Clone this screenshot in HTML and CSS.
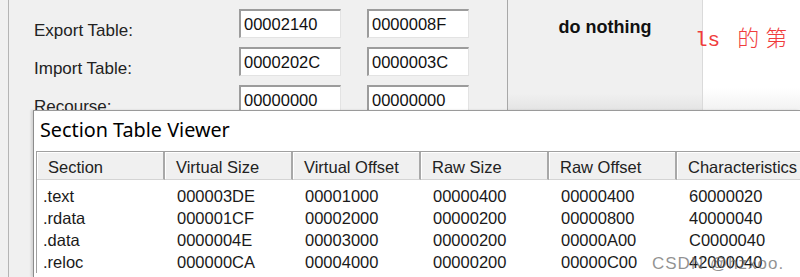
FILE: index.html
```html
<!DOCTYPE html>
<html lang="en">

<head>
  <title>Section Table Viewer</title>
  <meta charset="utf-8" />
  <link rel="stylesheet" href="styles.css">
</head>

<body>
  <div class="frame">
    <div class="top">
      <div class="fields">
        <span class="label">Export Table:</span>
        <span class="box">00002140</span>
        <span class="box">0000008F</span>
        <span class="label">Import Table:</span>
        <span class="box">0000202C</span>
        <span class="box">0000003C</span>
        <span class="label">Recourse:</span>
        <span class="box">00000000</span>
        <span class="box">00000000</span>
      </div>
      <div class="panel">do nothing</div>
      <div class="note"><span class="latin">ls</span><span class="cjk">的第</span></div>
    </div>

    <div class="dialog">
      <div class="title">Section Table Viewer</div>
      <div class="list">
        <div class="head">Section</div>
        <div class="head">Virtual Size</div>
        <div class="head">Virtual Offset</div>
        <div class="head">Raw Size</div>
        <div class="head">Raw Offset</div>
        <div class="head">Characteristics</div>

        <div class="cell first">.text</div>
        <div class="cell">000003DE</div>
        <div class="cell">00001000</div>
        <div class="cell">00000400</div>
        <div class="cell">00000400</div>
        <div class="cell">60000020</div>

        <div class="cell first">.rdata</div>
        <div class="cell">000001CF</div>
        <div class="cell">00002000</div>
        <div class="cell">00000200</div>
        <div class="cell">00000800</div>
        <div class="cell">40000040</div>

        <div class="cell first">.data</div>
        <div class="cell">0000004E</div>
        <div class="cell">00003000</div>
        <div class="cell">00000200</div>
        <div class="cell">00000A00</div>
        <div class="cell">C0000040</div>

        <div class="cell first">.reloc</div>
        <div class="cell">000000CA</div>
        <div class="cell">00004000</div>
        <div class="cell">00000200</div>
        <div class="cell">00000C00</div>
        <div class="cell">42000040</div>
      </div>
      <div class="mark">CSDN @hzxoo.</div>
    </div>
  </div>
</body>

</html>
```

FILE: styles.css
```css
html,
body {
  margin: 0;
  height: 277px;
  overflow: hidden;
}

body {
  background: #f0f0f0;
  font-family: "Liberation Sans", Arial, sans-serif;
  color: #1a1a1a;
}

.frame {
  margin-left: 8px;
  height: 277px;
  border-left: 1px solid #b4b4b4;
}

.top {
  display: flex;
  height: 110px;
  overflow: hidden;
}

.fields {
  width: 473px;
  padding: 9px 0 0 25px;
  display: grid;
  grid-template-columns: 179px 102px 102px;
  grid-auto-rows: 29px;
  column-gap: 26px;
  row-gap: 9px;
  font-size: 16.5px;
}

.label {
  padding-top: 12px;
  line-height: 19px;
  font-size: 17px;
  color: #222;
}

.box {
  box-sizing: border-box;
  background: #fff;
  border-top: 2px solid #9c9c9c;
  border-left: 2px solid #9c9c9c;
  border-right: 1px solid #e3e3e3;
  border-bottom: 1px solid #e3e3e3;
  padding-left: 3px;
  line-height: 26px;
  color: #111;
}

.panel {
  width: 194px;
  border-left: 1px solid #a8a8a8;
  padding-top: 17px;
  text-align: center;
  font-weight: bold;
  font-size: 18px;
  line-height: 20px;
  color: #111;
  background: linear-gradient(#f0f0f0 85%, #e4e4e4);
}

.note {
  flex: 1;
  background: linear-gradient(#fff 80%, #f2f2f2);
  border-left: 1px solid #dadada;
  padding-top: 24px;
  color: #f03c3c;
  font-size: 21px;
  line-height: 24px;
  white-space: nowrap;
}

.latin {
  font-family: "Liberation Mono", monospace;
  margin-left: -8px;
}

.cjk {
  font-family: "Noto Sans CJK SC", sans-serif;
  font-weight: 300;
  font-size: 22px;
  margin-left: 17px;
  letter-spacing: 6px;
}

.dialog {
  position: relative;
  margin-left: 24px;
  height: 166px;
  background: #fff;
  border-top: 1px solid #9a9a9a;
  border-left: 1px solid #8c8c8c;
  box-shadow: -2px 0 2px rgba(0, 0, 0, 0.12);
}

.title {
  height: 40px;
  padding-left: 6px;
  font-family: "Noto Sans", "Open Sans", sans-serif;
  font-size: 19.8px;
  line-height: 38px;
  color: #000;
}

.list {
  margin-left: 2px;
  border-top: 1px solid #a0a0a0;
  border-left: 1px solid #a0a0a0;
  display: grid;
  grid-template-columns: repeat(6, 128px);
  grid-template-rows: 28px 27px repeat(3, 22px);
  font-size: 16.5px;
}

.head {
  box-sizing: border-box;
  background: #f0f0f0;
  border-right: 2px solid #a8a8a8;
  border-bottom: 1px solid #d4d4d4;
  box-shadow: inset 1px 1px #fff;
  padding: 3px 0 0 11px;
  line-height: 25px;
  color: #222;
  white-space: nowrap;
  overflow: hidden;
}

.cell {
  padding-left: 12px;
  line-height: 22px;
  white-space: nowrap;
}

.list .cell:nth-child(-n+12) {
  padding-top: 5px;
}

.cell.first {
  padding-left: 6px;
}

.mark {
  position: absolute;
  left: 618px;
  top: 143px;
  font-size: 17px;
  letter-spacing: 1px;
  color: rgba(110, 110, 110, 0.75);
  white-space: nowrap;
}
```
